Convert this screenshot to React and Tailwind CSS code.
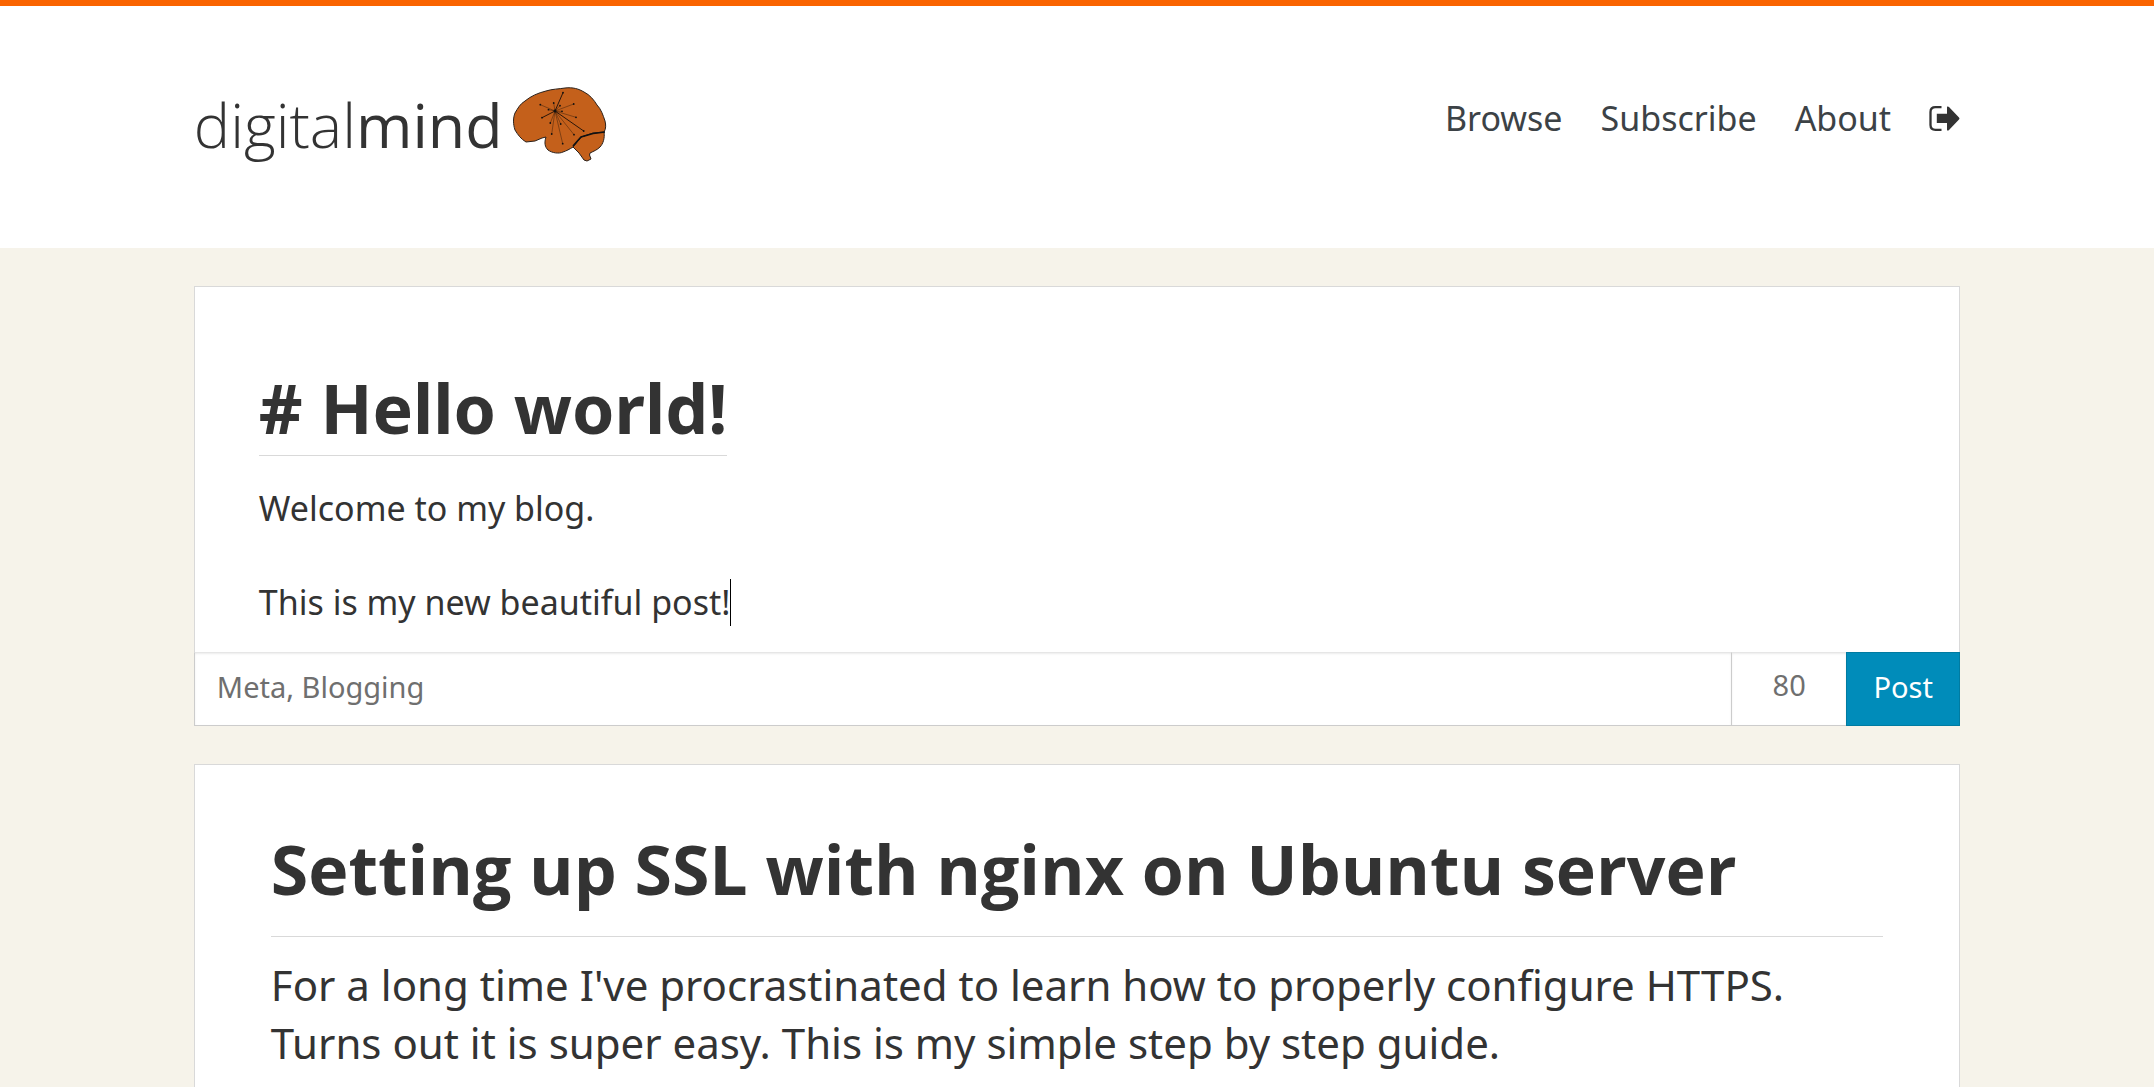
import React from "react";

const navLinks = ["Browse", "Subscribe", "About"];

const rays = [
  { x: 50, y: 5.7, strong: true },
  { x: 29, y: 30.7, strong: true },
  { x: 70.7, y: 44, strong: true },
  { x: 27.3, y: 17.7 },
  { x: 40.7, y: 16 },
  { x: 47, y: 18.7 },
  { x: 60.7, y: 17 },
  { x: 35.5, y: 22.7 },
  { x: 49, y: 24.3 },
  { x: 63, y: 30.3 },
  { x: 61, y: 47.7 },
  { x: 47.7, y: 37 },
  { x: 37.3, y: 36 },
  { x: 38.7, y: 47 },
  { x: 49.7, y: 56.7 },
];

function Brain() {
  return (
    <svg viewBox="0 0 94 76" className="mt-1 h-[76px] w-[94px]" aria-hidden="true">
      <g fill="#c4601b" stroke="#2b211b" strokeWidth="1" strokeLinejoin="round">
        <path d="M91 45C92 51 90 57 87 60C84 63 81 64 77 66L76.5 68L78 72L74 74L71 73L66 66L60 60L68 50L80 46Z" />
        <path d="M52 1C60 0 66 2 71 5C77 8 81 13 84 18C88 22 90 28 92 34C93 38 93 42 91 45L80 46L68 50L60 60C57 62 53 64 50 65C46 67 39 66 35 63C32 60 31 56 33 50L29 51L22 54L13 55C8 52 5 48 2 43C0 37 0 31 2 26C5 21 7 17 12 14C18 9 25 6 33 4C39 2 46 2 52 1Z" />
      </g>
      <path d="M92 45L80 46.5L68 50L60 59" fill="none" stroke="#111" strokeWidth="1.6" />
      {rays.map(({ x, y, strong }) => (
        <g key={`${x}-${y}`}>
          <line x1="42" y1="24" x2={x} y2={y} stroke="#1a0f08" strokeWidth={strong ? 0.9 : 0.4} />
          <circle cx={x} cy={y} r="0.9" fill="#111" />
        </g>
      ))}
      <circle cx="42" cy="24" r="1.4" fill="#111" />
    </svg>
  );
}

function ExitIcon() {
  return (
    <svg viewBox="0 0 31 25" className="h-[25px] w-[31px]" aria-hidden="true">
      <path d="M12.5 1.2H6.5Q1.5 1.2 1.5 6V19Q1.5 23.8 6.5 23.8H12.5" fill="none" stroke="#333" strokeWidth="2.3" />
      <path d="M7.8 7.8H18V.8Q19 0 20 1L30 11.5Q31 12.5 30 13.5L20 24Q19 25 18 24.2V17H7.8Z" fill="#333" />
    </svg>
  );
}

export default function App() {
  return (
    <div className="flex min-h-screen flex-col border-t-[6px] border-[#fa6400] bg-[#f6f3ea] font-['Noto_Sans',sans-serif] text-[34px] leading-[47px] text-[#333]">
      <header className="bg-white px-[9%] pt-[77px] pb-[76px]">
        <div className="flex items-start justify-between">
          <a href="#" className="flex h-[89px] items-start gap-2.5">
            <span className="font-['Open_Sans',sans-serif] text-[61px] leading-[83px] font-light">
              digital<span className="font-normal">mind</span>
            </span>
            <Brain />
          </a>
          <nav className="flex items-center gap-[38px] pt-3 text-[#3c4246]">
            {navLinks.map((label) => (
              <a key={label} href="#">{label}</a>
            ))}
            <a href="#" aria-label="Log out"><ExitIcon /></a>
          </nav>
        </div>
      </header>

      <main className="flex flex-1 flex-col gap-[38px] px-[9%] pt-[38px]">
        <form className="flex flex-col border border-b-0 border-[#d9d9d9] bg-white">
          <div role="textbox" aria-label="Post content" aria-multiline="true" className="flex flex-col items-start px-16 pt-[74px] pb-[26px]">
            <h1 className="border-b border-[#d9d9d9] text-[68px] leading-[94px] font-bold"># Hello world!</h1>
            <p className="mt-[29px]">Welcome to my blog.</p>
            <p className="mt-[47px] flex">
              This is my new beautiful post!<span className="h-[47px] w-px bg-black" />
            </p>
          </div>
          <div className="-mx-px flex h-[74px] text-[29px]">
            <input aria-label="Tags" defaultValue="Meta, Blogging" className="min-w-0 flex-1 border border-[#ccc] border-t-[#e6e6e6] px-[22px] pb-1.5 text-[#6f6f6f] shadow-[inset_0_1px_2px_rgba(0,0,0,0.08)] outline-none" />
            <input aria-label="Width" defaultValue="80" className="w-[114px] border-y border-[#ccc] border-t-[#e6e6e6] pb-2.5 text-center text-[#6f6f6f] shadow-[inset_0_1px_2px_rgba(0,0,0,0.08)] outline-none" />
            <button type="button" className="w-[114px] border border-[#007ba1] bg-[#008cba] pb-1.5 text-white">Post</button>
          </div>
        </form>

        <article className="flex-1 border border-b-0 border-[#d9d9d9] bg-white px-[76px] pt-[57px]">
          <h2 className="border-b border-[#d9d9d9] pb-5 font-['Open_Sans',sans-serif] text-[68px] leading-[94px] font-bold">Setting up SSL with nginx on Ubuntu server</h2>
          <p className="pt-[19px] text-[42px] leading-[58px]">
            For a long time I've procrastinated to learn how to properly configure HTTPS. Turns out it is super easy. This is my simple step by step guide.
          </p>
        </article>
      </main>
    </div>
  );
}
